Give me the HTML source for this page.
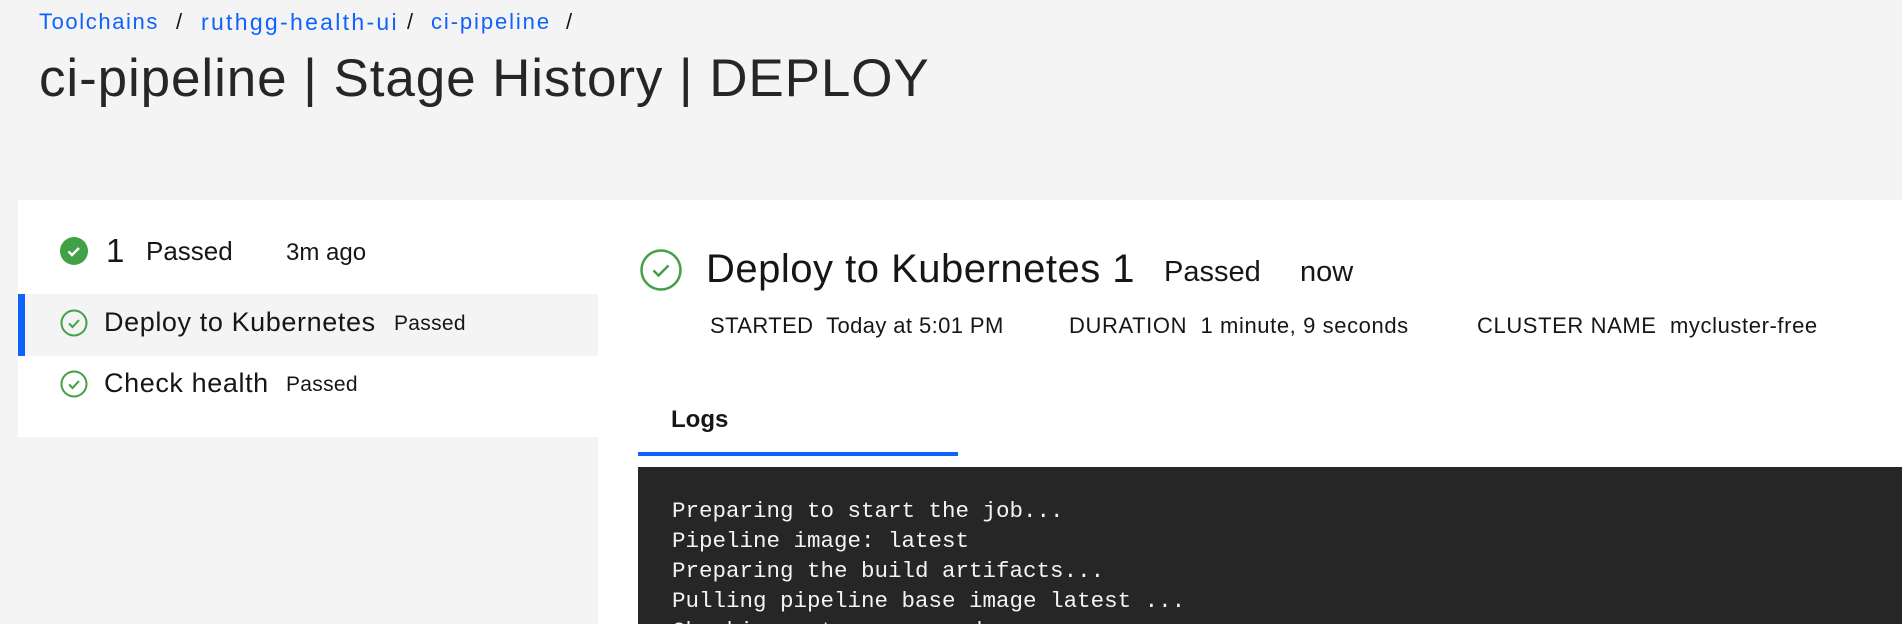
<!DOCTYPE html>
<html><head><meta charset="utf-8"><style>
*{margin:0;padding:0;box-sizing:border-box}
html,body{width:1902px;height:624px;overflow:hidden}
body{background:#f4f4f4;font-family:"Liberation Sans",sans-serif;color:#161616;position:relative}
.a{position:absolute;white-space:nowrap}
.bc{top:9px;font-size:22px;color:#0f62fe;letter-spacing:1.3px}
.sl{top:9px;font-size:22px;color:#161616}
.title{top:48px;left:39px;font-size:53px;color:#262626;letter-spacing:0.9px}
.lp{left:18px;top:200px;width:580px;height:237px;background:#fff}
.rp{left:598px;top:200px;width:1304px;height:424px;background:#fff}
.sel{left:18px;top:294px;width:580px;height:62px;background:#f4f4f4;border-left:7px solid #0f62fe}
.mono{font-family:"Liberation Mono",monospace;color:#f4f4f4;font-size:22.5px;line-height:30px}
</style></head><body>
<div class="a bc" style="left:39px;letter-spacing:1.6px">Toolchains</div>
<div class="a sl" style="left:176px">/</div>
<div class="a bc" style="left:201px;font-size:23px;letter-spacing:2.3px">ruthgg-health-ui</div>
<div class="a sl" style="left:407px">/</div>
<div class="a bc" style="left:431px;letter-spacing:1.9px">ci-pipeline</div>
<div class="a sl" style="left:566px">/</div>
<div class="a title">ci-pipeline | Stage History | DEPLOY</div>
<div class="a lp"></div>
<div class="a rp"></div>
<div class="a sel"></div>
<svg class="a" style="left:60px;top:237px" width="28" height="28" viewBox="0 0 28 28"><circle cx="14" cy="14" r="14" fill="#42a047"/><path d="M8.5 14.5l3.5 3.5 7-7" stroke="#fff" stroke-width="2.4" fill="none"/></svg>
<div class="a" style="left:106px;top:232px;font-size:33px">1</div>
<div class="a" style="left:146px;top:236px;font-size:26px">Passed</div>
<div class="a" style="left:286px;top:239px;font-size:24px">3m ago</div>
<svg class="a" style="left:60px;top:309px" width="28" height="28" viewBox="0 0 28 28"><circle cx="14" cy="14" r="12.5" fill="none" stroke="#42a047" stroke-width="2"/><path d="M9 14.5l3.5 3.5 6.5-7" stroke="#42a047" stroke-width="2" fill="none"/></svg>
<div class="a" style="left:104px;top:307px;font-size:27px;letter-spacing:0.6px">Deploy to Kubernetes</div>
<div class="a" style="left:394px;top:312px;font-size:21px;letter-spacing:0.3px">Passed</div>
<svg class="a" style="left:60px;top:370px" width="28" height="28" viewBox="0 0 28 28"><circle cx="14" cy="14" r="12.5" fill="none" stroke="#42a047" stroke-width="2"/><path d="M9 14.5l3.5 3.5 6.5-7" stroke="#42a047" stroke-width="2" fill="none"/></svg>
<div class="a" style="left:104px;top:368px;font-size:27px;letter-spacing:0.6px">Check health</div>
<div class="a" style="left:286px;top:373px;font-size:21px;letter-spacing:0.3px">Passed</div>
<svg class="a" style="left:640px;top:249px" width="42" height="42" viewBox="0 0 42 42"><circle cx="21" cy="21" r="19.5" fill="none" stroke="#42a047" stroke-width="2.5"/><path d="M13.5 21.5l5 5 10-10" stroke="#42a047" stroke-width="2.5" fill="none"/></svg>
<div class="a" style="left:706px;top:247px;font-size:40px;letter-spacing:0.5px">Deploy to Kubernetes 1</div>
<div class="a" style="left:1164px;top:256px;font-size:29px">Passed</div>
<div class="a" style="left:1300px;top:256px;font-size:29px">now</div>
<div class="a" style="left:710px;top:313px;font-size:22px;letter-spacing:0.4px">STARTED&nbsp; Today at 5:01 PM</div>
<div class="a" style="left:1069px;top:313px;font-size:22px;letter-spacing:0.6px">DURATION&nbsp; 1 minute, 9 seconds</div>
<div class="a" style="left:1477px;top:313px;font-size:22px;letter-spacing:0.6px">CLUSTER NAME&nbsp; mycluster-free</div>
<div class="a" style="left:671px;top:406px;font-size:24px;font-weight:bold">Logs</div>
<div class="a" style="left:638px;top:452px;width:320px;height:4px;background:#0f62fe"></div>
<div class="a" style="left:638px;top:467px;width:1264px;height:157px;background:#262626"></div>
<div class="a mono" style="left:672px;top:496px">Preparing to start the job...<br>Pipeline image: latest<br>Preparing the build artifacts...<br>Pulling pipeline base image latest ...<br>Checking out source code ...</div>
</body></html>
